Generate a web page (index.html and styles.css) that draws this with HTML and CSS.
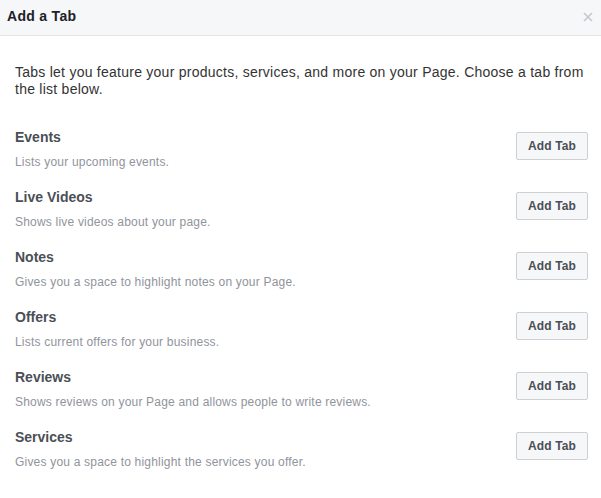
FILE: index.html
```html
<!DOCTYPE html>
<html>
<head>
<meta charset="utf-8">
<link rel="stylesheet" href="styles.css">
</head>
<body>
<div class="dialog">
  <div class="header">
    <span class="title">Add a Tab</span>
    <svg class="close" width="10" height="10" viewBox="0 0 10 10"><path d="M1 1 L9 9 M9 1 L1 9" stroke="#c4c7cc" stroke-width="1.6" fill="none"/></svg>
  </div>
  <div class="content">
    <p class="intro">Tabs let you feature your products, services, and more on your Page. Choose a tab from the list below.</p>
    <ul class="tabs">
      <li class="row"><div class="info"><div class="name">Events</div><div class="desc">Lists your upcoming events.</div></div><button class="btn">Add Tab</button></li>
      <li class="row"><div class="info"><div class="name">Live Videos</div><div class="desc">Shows live videos about your page.</div></div><button class="btn">Add Tab</button></li>
      <li class="row"><div class="info"><div class="name">Notes</div><div class="desc">Gives you a space to highlight notes on your Page.</div></div><button class="btn">Add Tab</button></li>
      <li class="row"><div class="info"><div class="name">Offers</div><div class="desc">Lists current offers for your business.</div></div><button class="btn">Add Tab</button></li>
      <li class="row"><div class="info"><div class="name">Reviews</div><div class="desc">Shows reviews on your Page and allows people to write reviews.</div></div><button class="btn">Add Tab</button></li>
      <li class="row"><div class="info"><div class="name">Services</div><div class="desc">Gives you a space to highlight the services you offer.</div></div><button class="btn">Add Tab</button></li>
    </ul>
  </div>
</div>
</body>
</html>
```
FILE: styles.css
```css
html, body {
  margin: 0;
  padding: 0;
  background: #fff;
  font-family: "Liberation Sans", Arial, sans-serif;
}
.dialog {
  width: 601px;
}
.header {
  height: 35px;
  background: #f6f7f9;
  border-bottom: 1px solid #e5e5e5;
  display: flex;
  align-items: center;
  justify-content: space-between;
  padding: 0 8px 0 7px;
  box-sizing: content-box;
}
.title {
  font-size: 14px;
  letter-spacing: 0.3px;
  font-weight: bold;
  color: #1d2129;
  margin-top: -4px;
}
.close {
  margin-top: -2px;
}
.content {
  padding: 0 13px 0 15px;
}
.intro {
  margin: 28px 0 31px;
  font-size: 14px;
  letter-spacing: 0.25px;
  line-height: 17px;
  color: #333;
}
.tabs {
  list-style: none;
  margin: 0;
  padding: 0;
  display: flex;
  flex-direction: column;
  gap: 19px;
}
.row {
  display: flex;
  justify-content: space-between;
  align-items: flex-start;
  height: 41px;
}
.name {
  font-size: 14px;
  font-weight: bold;
  line-height: 16px;
  color: #4b4f56;
}
.desc {
  margin-top: 9px;
  font-size: 12px;
  letter-spacing: 0.2px;
  line-height: 16px;
  color: #90949c;
}
.btn {
  margin-top: 3px;
  width: 72px;
  height: 28px;
  background: #f6f7f9;
  border: 1px solid #ced0d4;
  border-radius: 2px;
  font-family: "Liberation Sans", Arial, sans-serif;
  font-size: 12px;
  letter-spacing: 0.15px;
  font-weight: bold;
  color: #4b4f56;
  padding: 0;
}
```
